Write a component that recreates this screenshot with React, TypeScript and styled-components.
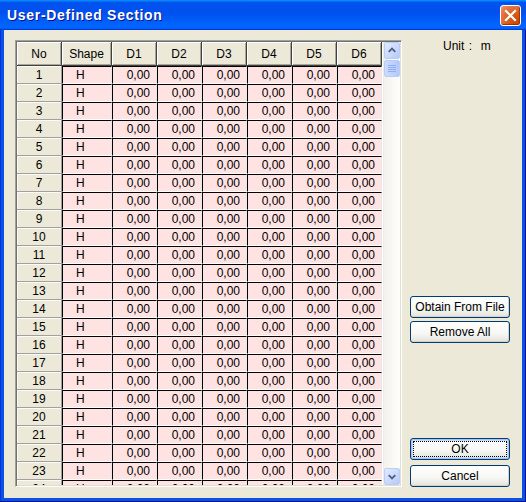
import React from "react";
import styled, { createGlobalStyle } from "styled-components";

const GlobalStyle = createGlobalStyle`
  html, body {
    margin: 0;
    padding: 0;
    overflow: hidden;
    background: #ece9d8;
  }
  * {
    box-sizing: border-box;
  }
`;

const columns = ["No", "Shape", "D1", "D2", "D3", "D4", "D5", "D6"];
const rows = Array.from({ length: 26 }, (_, i) => i + 1);

const App = () => {
  return (
    <>
      <GlobalStyle />
      <Window>
        <TitleBar>
          <Title>User-Defined Section</Title>
          <CloseButton>
            <svg width="13" height="13" viewBox="0 0 13 13">
              <path d="M2 2 L11 11 M11 2 L2 11" stroke="#fff" strokeWidth="2.2" strokeLinecap="square" />
            </svg>
          </CloseButton>
        </TitleBar>
        <Body>
          <GridFrame>
            <Table>
              <Row>
                {columns.map((c) => (
                  <HeaderCell key={c}>{c}</HeaderCell>
                ))}
              </Row>
              {rows.map((n) => (
                <Row key={n}>
                  <IndexCell>{n}</IndexCell>
                  <DataCell $align="center">H</DataCell>
                  {[1, 2, 3, 4, 5, 6].map((d) => (
                    <DataCell key={d} $align="right">0,00</DataCell>
                  ))}
                </Row>
              ))}
            </Table>
            <ScrollBar>
              <ScrollButton>
                <svg width="15" height="15" viewBox="0 0 15 15">
                  <path d="M4 9 L7.5 5.5 L11 9" stroke="#4d6185" strokeWidth="2" fill="none" />
                </svg>
              </ScrollButton>
              <Thumb>
                <svg width="8" height="8" viewBox="0 0 8 8">
                  <path d="M0 0.5 H8 M0 2.5 H8 M0 4.5 H8 M0 6.5 H8" stroke="#8cb0f8" strokeWidth="1" />
                </svg>
              </Thumb>
              <Track />
              <ScrollButton>
                <svg width="15" height="15" viewBox="0 0 15 15">
                  <path d="M4 6 L7.5 9.5 L11 6" stroke="#4d6185" strokeWidth="2" fill="none" />
                </svg>
              </ScrollButton>
            </ScrollBar>
          </GridFrame>
          <SidePanel>
            <UnitLabel>Unit :&nbsp;&nbsp;m</UnitLabel>
            <ToolGroup>
              <Button>Obtain From File</Button>
              <Button>Remove All</Button>
            </ToolGroup>
            <DialogGroup>
              <Button $focused>OK</Button>
              <Button>Cancel</Button>
            </DialogGroup>
          </SidePanel>
        </Body>
      </Window>
    </>
  );
};

const Window = styled.div`
  width: 526px;
  height: 502px;
  display: flex;
  flex-direction: column;
  background: #0a52e6;
  padding: 0 4px 4px 4px;
  box-shadow: inset -1px -1px 0 #00138c, inset 1px 0 0 #0831d9;
  font-family: "Liberation Sans", Arial, sans-serif;
`;

const TitleBar = styled.div`
  height: 30px;
  margin: 0 -4px;
  display: flex;
  align-items: center;
  justify-content: space-between;
  padding: 0 5px 0 7px;
  background: linear-gradient(
    180deg,
    #0997ff 0%,
    #0053ee 8%,
    #0050ee 40%,
    #0066ff 88%,
    #0066ff 93%,
    #005bff 95%,
    #003dd7 96%,
    #003dd7 100%
  );
`;

const Title = styled.span`
  color: #fff;
  font-weight: bold;
  font-size: 14px;
  letter-spacing: 0.7px;
  text-shadow: 1px 1px 0 #0f1089;
`;

const CloseButton = styled.div`
  width: 21px;
  height: 21px;
  border: 1px solid #fff;
  border-radius: 3px;
  display: flex;
  align-items: center;
  justify-content: center;
  background: radial-gradient(circle at 80% 80%, #cc4600 0%, #dc6527 50%, #e87a4d 80%, #f2a285 100%);
  box-shadow: inset -1px -1px 1px #a82b00;
`;

const Body = styled.div`
  flex: 1;
  display: flex;
  background: #ece9d8;
  padding: 10px 0 11px 11px;
`;

const GridFrame = styled.div`
  width: 387px;
  height: 447px;
  display: flex;
  background: #fff;
  border: 1px solid;
  border-color: #a0a0a0 #ffffff #ffffff #a0a0a0;
  box-shadow: inset 1px 1px 0 #707070, inset -1px -1px 0 #e0ded4;
  padding: 1px;
  overflow: hidden;
`;

const Table = styled.div`
  width: 366px;
  display: flex;
  flex-direction: column;
  overflow: hidden;
`;

const Row = styled.div`
  display: grid;
  grid-template-columns: 45px 50px repeat(6, 45px);
  flex-shrink: 0;
`;

const HeaderCell = styled.div`
  height: 24px;
  display: flex;
  align-items: center;
  justify-content: center;
  background: #ece9d8;
  font-size: 12px;
  color: #000;
  border-right: 1px solid #404040;
  border-bottom: 1px solid #404040;
  box-shadow: inset 1px 1px 0 #ffffff, inset -1px -1px 0 #a8a599;
`;

const IndexCell = styled.div`
  height: 18px;
  display: flex;
  align-items: center;
  justify-content: center;
  background: #ece9d8;
  font-size: 12px;
  color: #000;
  border-right: 1px solid #a0a0a0;
  border-bottom: 1px solid #a0a0a0;
  box-shadow: inset 1px 1px 0 #fbfaf6;
`;

const DataCell = styled.div<{ $align: "center" | "right" }>`
  height: 18px;
  display: flex;
  align-items: center;
  justify-content: ${({ $align }) => ($align === "center" ? "flex-start" : "flex-end")};
  padding: ${({ $align }) => ($align === "center" ? "0 0 0 13px" : "0 6px 0 0")};
  background: #ffe3e3;
  font-size: 12px;
  color: #000;
  border-top: 1px solid #000;
  border-left: 1px solid #000;
  border-right: 1px solid #e8e8e8;
  border-bottom: 1px solid #ffffff;
`;

const ScrollBar = styled.div`
  width: 17px;
  display: flex;
  flex-direction: column;
  background: linear-gradient(90deg, #f3f1ec 0%, #fefefb 100%);
  border-left: 1px solid #eeede5;
`;

const ScrollButton = styled.div`
  width: 16px;
  height: 17px;
  flex-shrink: 0;
  display: flex;
  align-items: center;
  justify-content: center;
  border: 1px solid #b8cdf9;
  border-radius: 2px;
  background: linear-gradient(135deg, #e2ebfe 0%, #c8d7fb 60%, #b6caf6 100%);
`;

const Thumb = styled.div`
  width: 16px;
  height: 17px;
  flex-shrink: 0;
  display: flex;
  align-items: center;
  justify-content: center;
  margin-top: 1px;
  border: 1px solid #b8cdf9;
  border-radius: 2px;
  background: linear-gradient(90deg, #cddbfc 0%, #c1d3fb 50%, #b4c8f6 100%);
`;

const Track = styled.div`
  flex: 1;
`;

const SidePanel = styled.div`
  width: 100px;
  height: 447px;
  margin-left: 8px;
  display: flex;
  flex-direction: column;
`;

const UnitLabel = styled.div`
  font-size: 12px;
  color: #000;
  padding-left: 33px;
  line-height: 14px;
  margin-top: -1px;
  word-spacing: 1px;
`;

const ToolGroup = styled.div`
  display: flex;
  flex-direction: column;
  gap: 3px;
  margin-top: 243px;
`;

const DialogGroup = styled.div`
  display: flex;
  flex-direction: column;
  gap: 5px;
  margin-top: auto;
`;

const Button = styled.div<{ $focused?: boolean }>`
  height: 22px;
  display: flex;
  align-items: center;
  justify-content: center;
  font-size: 12px;
  color: #000;
  border: 1px solid #003c74;
  border-radius: 3px;
  background: linear-gradient(180deg, #ffffff 0%, #f6f6f3 60%, #e3e2da 100%);
  box-shadow: ${({ $focused }) =>
    $focused ? "inset 0 0 0 1px #a7c3f0, inset 0 0 0 2px #cbdcf7" : "inset -1px -1px 0 #d6d0c5"};
  outline: ${({ $focused }) => ($focused ? "1px dotted #000" : "none")};
  outline-offset: -4px;
`;

export default App;
